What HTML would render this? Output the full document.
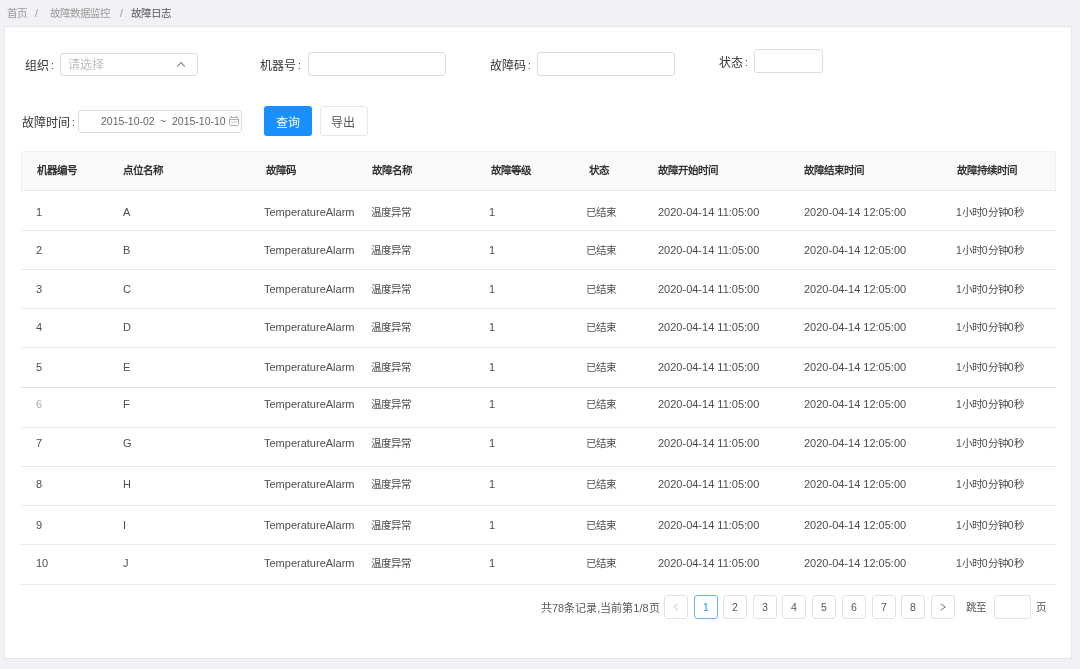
<!DOCTYPE html><html lang="zh-CN"><head><meta charset="utf-8"><style>
*{box-sizing:border-box;margin:0;padding:0}
html,body{width:1080px;height:669px;overflow:hidden;background:#f0f2f5;font-family:"Liberation Sans",sans-serif;color:#4d4d4d}
.a{position:absolute;white-space:nowrap;line-height:14px;height:14px;will-change:transform}
.t{font-size:11px}
.ic{position:absolute;display:block}
.card{position:absolute;left:4px;top:26px;width:1068px;height:633px;background:#fff;border:1px solid #e4e6ea}
.inp{position:absolute;background:#fff;border:1px solid #dedede;border-radius:3px}
.lbl{font-size:12px;color:#333}
.co{font-size:10px;position:relative;top:-1.5px;margin-left:2px}
.btn{position:absolute;border-radius:3px;font-size:12.5px;line-height:30px;text-align:center}
.hd{position:absolute;left:21px;top:151px;width:1035px;height:40px;background:#fafafa;border:1px solid #efefef;border-bottom:1px solid #e8e8e8;border-radius:3px 3px 0 0}
.ln{position:absolute;left:21px;width:1035px;height:1px;background:#ececec}
.th{font-weight:bold;color:#333;font-size:10.5px}
.pg{position:absolute;top:595px;width:24px;height:24px;border:1px solid #e3e3e3;border-radius:3px;background:#fff}
</style></head><body>
<div class="a " style="left:7.00px;top:6.00px;font-size:10.5px;color:#999">首页</div>
<div class="a " style="left:35.00px;top:6.00px;font-size:10.5px;color:#999">/</div>
<div class="a " style="left:50.00px;top:6.00px;font-size:10.5px;color:#999">故障数据监控</div>
<div class="a " style="left:119.70px;top:6.00px;font-size:10.5px;color:#999">/</div>
<div class="a " style="left:131.00px;top:6.00px;font-size:10.5px;color:#555">故障日志</div>
<div class="card"></div>
<div class="a lbl" style="left:25.00px;top:58.60px;">组织<span class="co">:</span></div>
<div class="inp" style="left:60px;top:53px;width:138px;height:23px"></div>
<div class="a " style="left:67.80px;top:58.00px;font-size:12px;color:#bfbfbf">请选择</div>
<svg class="ic" style="left:176px;top:61px" width="10" height="7" viewBox="0 0 10 7"><path d="M1.2 5.6 L5 1.8 L8.8 5.6" fill="none" stroke="#9a9a9a" stroke-width="1.4"/></svg>
<div class="a lbl" style="left:260.00px;top:58.60px;">机器号<span class="co">:</span></div>
<div class="inp" style="left:308px;top:52px;width:138px;height:24px"></div>
<div class="a lbl" style="left:489.50px;top:59.00px;">故障码<span class="co">:</span></div>
<div class="inp" style="left:537px;top:52px;width:138px;height:24px"></div>
<div class="a lbl" style="left:718.50px;top:56.00px;">状态<span class="co">:</span></div>
<div class="inp" style="left:754px;top:49px;width:69px;height:24px"></div>
<div class="a lbl" style="left:21.50px;top:116.00px;">故障时间<span class="co">:</span></div>
<div class="inp" style="left:78px;top:110px;width:164px;height:23px"></div>
<div class="a " style="left:101.00px;top:114.00px;font-size:10.5px;color:#666">2015-10-02</div>
<div class="a " style="left:160.00px;top:114.00px;font-size:10.5px;color:#666">~</div>
<div class="a " style="left:172.00px;top:114.00px;font-size:10.5px;color:#666">2015-10-10</div>
<svg class="ic" style="left:229px;top:115px" width="10" height="11" viewBox="0 0 10 11"><rect x="0.5" y="2.5" width="9" height="8" rx="1" fill="none" stroke="#b0b0b0" stroke-width="1"/><line x1="0.5" y1="4.5" x2="9.5" y2="4.5" stroke="#b0b0b0" stroke-width="1"/><line x1="2.5" y1="1" x2="2.5" y2="3" stroke="#b0b0b0" stroke-width="1"/><line x1="7.5" y1="1" x2="7.5" y2="3" stroke="#b0b0b0" stroke-width="1"/><rect x="2" y="6" width="6" height="2.5" fill="#e0e0e0"/></svg>
<div class="btn" style="left:264px;top:106px;width:48px;height:30px;background:#1890ff"></div>
<div class="btn" style="left:320px;top:106px;width:48px;height:30px;background:#fff;border:1px solid #e8e8e8"></div>
<div class="a " style="left:276.00px;top:115.70px;font-size:12px;color:#fff">查询</div>
<div class="a " style="left:331.00px;top:115.70px;font-size:12px;color:#555">导出</div>
<div class="hd"></div>
<div class="a th" style="left:37.00px;top:163.30px;">机器编号</div>
<div class="a th" style="left:123.00px;top:163.30px;">点位名称</div>
<div class="a th" style="left:265.80px;top:163.30px;">故障码</div>
<div class="a th" style="left:372.40px;top:163.30px;">故障名称</div>
<div class="a th" style="left:491.00px;top:163.30px;">故障等级</div>
<div class="a th" style="left:588.50px;top:163.30px;">状态</div>
<div class="a th" style="left:658.40px;top:163.30px;">故障开始时间</div>
<div class="a th" style="left:803.90px;top:163.30px;">故障结束时间</div>
<div class="a th" style="left:957.20px;top:163.30px;">故障持续时间</div>
<div class="ln" style="top:230px;"></div>
<div class="ln" style="top:269px;"></div>
<div class="ln" style="top:308px;"></div>
<div class="ln" style="top:347px;"></div>
<div class="ln" style="top:387px;background:#e2e2e2;"></div>
<div class="ln" style="top:427px;"></div>
<div class="ln" style="top:466px;"></div>
<div class="ln" style="top:505px;"></div>
<div class="ln" style="top:544px;"></div>
<div class="ln" style="top:584px;"></div>
<div class="a t" style="left:36.00px;top:204.50px;">1</div>
<div class="a t" style="left:123.00px;top:204.50px;">A</div>
<div class="a t" style="left:264.00px;top:204.50px;">TemperatureAlarm</div>
<div class="a t" style="left:371.00px;top:204.50px;font-size:10.5px;">温度异常</div>
<div class="a t" style="left:488.80px;top:204.50px;">1</div>
<div class="a t" style="left:586.00px;top:204.50px;font-size:10.5px;">已结束</div>
<div class="a t" style="left:658.00px;top:204.50px;">2020-04-14 11:05:00</div>
<div class="a t" style="left:804.00px;top:204.50px;">2020-04-14 12:05:00</div>
<div class="a t" style="left:956.00px;top:204.50px;font-size:10.5px;">1小时0分钟0秒</div>
<div class="a t" style="left:36.00px;top:242.50px;">2</div>
<div class="a t" style="left:123.00px;top:242.50px;">B</div>
<div class="a t" style="left:264.00px;top:242.50px;">TemperatureAlarm</div>
<div class="a t" style="left:371.00px;top:242.50px;font-size:10.5px;">温度异常</div>
<div class="a t" style="left:488.80px;top:242.50px;">1</div>
<div class="a t" style="left:586.00px;top:242.50px;font-size:10.5px;">已结束</div>
<div class="a t" style="left:658.00px;top:242.50px;">2020-04-14 11:05:00</div>
<div class="a t" style="left:804.00px;top:242.50px;">2020-04-14 12:05:00</div>
<div class="a t" style="left:956.00px;top:242.50px;font-size:10.5px;">1小时0分钟0秒</div>
<div class="a t" style="left:36.00px;top:281.50px;">3</div>
<div class="a t" style="left:123.00px;top:281.50px;">C</div>
<div class="a t" style="left:264.00px;top:281.50px;">TemperatureAlarm</div>
<div class="a t" style="left:371.00px;top:281.50px;font-size:10.5px;">温度异常</div>
<div class="a t" style="left:488.80px;top:281.50px;">1</div>
<div class="a t" style="left:586.00px;top:281.50px;font-size:10.5px;">已结束</div>
<div class="a t" style="left:658.00px;top:281.50px;">2020-04-14 11:05:00</div>
<div class="a t" style="left:804.00px;top:281.50px;">2020-04-14 12:05:00</div>
<div class="a t" style="left:956.00px;top:281.50px;font-size:10.5px;">1小时0分钟0秒</div>
<div class="a t" style="left:36.00px;top:319.70px;">4</div>
<div class="a t" style="left:123.00px;top:319.70px;">D</div>
<div class="a t" style="left:264.00px;top:319.70px;">TemperatureAlarm</div>
<div class="a t" style="left:371.00px;top:319.70px;font-size:10.5px;">温度异常</div>
<div class="a t" style="left:488.80px;top:319.70px;">1</div>
<div class="a t" style="left:586.00px;top:319.70px;font-size:10.5px;">已结束</div>
<div class="a t" style="left:658.00px;top:319.70px;">2020-04-14 11:05:00</div>
<div class="a t" style="left:804.00px;top:319.70px;">2020-04-14 12:05:00</div>
<div class="a t" style="left:956.00px;top:319.70px;font-size:10.5px;">1小时0分钟0秒</div>
<div class="a t" style="left:36.00px;top:359.50px;">5</div>
<div class="a t" style="left:123.00px;top:359.50px;">E</div>
<div class="a t" style="left:264.00px;top:359.50px;">TemperatureAlarm</div>
<div class="a t" style="left:371.00px;top:359.50px;font-size:10.5px;">温度异常</div>
<div class="a t" style="left:488.80px;top:359.50px;">1</div>
<div class="a t" style="left:586.00px;top:359.50px;font-size:10.5px;">已结束</div>
<div class="a t" style="left:658.00px;top:359.50px;">2020-04-14 11:05:00</div>
<div class="a t" style="left:804.00px;top:359.50px;">2020-04-14 12:05:00</div>
<div class="a t" style="left:956.00px;top:359.50px;font-size:10.5px;">1小时0分钟0秒</div>
<div class="a t" style="left:36.00px;top:397.20px;color:#aaa;">6</div>
<div class="a t" style="left:123.00px;top:397.20px;">F</div>
<div class="a t" style="left:264.00px;top:397.20px;">TemperatureAlarm</div>
<div class="a t" style="left:371.00px;top:397.20px;font-size:10.5px;">温度异常</div>
<div class="a t" style="left:488.80px;top:397.20px;">1</div>
<div class="a t" style="left:586.00px;top:397.20px;font-size:10.5px;">已结束</div>
<div class="a t" style="left:658.00px;top:397.20px;">2020-04-14 11:05:00</div>
<div class="a t" style="left:804.00px;top:397.20px;">2020-04-14 12:05:00</div>
<div class="a t" style="left:956.00px;top:397.20px;font-size:10.5px;">1小时0分钟0秒</div>
<div class="a t" style="left:36.00px;top:436.30px;">7</div>
<div class="a t" style="left:123.00px;top:436.30px;">G</div>
<div class="a t" style="left:264.00px;top:436.30px;">TemperatureAlarm</div>
<div class="a t" style="left:371.00px;top:436.30px;font-size:10.5px;">温度异常</div>
<div class="a t" style="left:488.80px;top:436.30px;">1</div>
<div class="a t" style="left:586.00px;top:436.30px;font-size:10.5px;">已结束</div>
<div class="a t" style="left:658.00px;top:436.30px;">2020-04-14 11:05:00</div>
<div class="a t" style="left:804.00px;top:436.30px;">2020-04-14 12:05:00</div>
<div class="a t" style="left:956.00px;top:436.30px;font-size:10.5px;">1小时0分钟0秒</div>
<div class="a t" style="left:36.00px;top:476.70px;">8</div>
<div class="a t" style="left:123.00px;top:476.70px;">H</div>
<div class="a t" style="left:264.00px;top:476.70px;">TemperatureAlarm</div>
<div class="a t" style="left:371.00px;top:476.70px;font-size:10.5px;">温度异常</div>
<div class="a t" style="left:488.80px;top:476.70px;">1</div>
<div class="a t" style="left:586.00px;top:476.70px;font-size:10.5px;">已结束</div>
<div class="a t" style="left:658.00px;top:476.70px;">2020-04-14 11:05:00</div>
<div class="a t" style="left:804.00px;top:476.70px;">2020-04-14 12:05:00</div>
<div class="a t" style="left:956.00px;top:476.70px;font-size:10.5px;">1小时0分钟0秒</div>
<div class="a t" style="left:36.00px;top:517.90px;">9</div>
<div class="a t" style="left:123.00px;top:517.90px;">I</div>
<div class="a t" style="left:264.00px;top:517.90px;">TemperatureAlarm</div>
<div class="a t" style="left:371.00px;top:517.90px;font-size:10.5px;">温度异常</div>
<div class="a t" style="left:488.80px;top:517.90px;">1</div>
<div class="a t" style="left:586.00px;top:517.90px;font-size:10.5px;">已结束</div>
<div class="a t" style="left:658.00px;top:517.90px;">2020-04-14 11:05:00</div>
<div class="a t" style="left:804.00px;top:517.90px;">2020-04-14 12:05:00</div>
<div class="a t" style="left:956.00px;top:517.90px;font-size:10.5px;">1小时0分钟0秒</div>
<div class="a t" style="left:36.00px;top:555.50px;">10</div>
<div class="a t" style="left:123.00px;top:555.50px;">J</div>
<div class="a t" style="left:264.00px;top:555.50px;">TemperatureAlarm</div>
<div class="a t" style="left:371.00px;top:555.50px;font-size:10.5px;">温度异常</div>
<div class="a t" style="left:488.80px;top:555.50px;">1</div>
<div class="a t" style="left:586.00px;top:555.50px;font-size:10.5px;">已结束</div>
<div class="a t" style="left:658.00px;top:555.50px;">2020-04-14 11:05:00</div>
<div class="a t" style="left:804.00px;top:555.50px;">2020-04-14 12:05:00</div>
<div class="a t" style="left:956.00px;top:555.50px;font-size:10.5px;">1小时0分钟0秒</div>
<div class="a " style="left:541.00px;top:600.80px;font-size:11px;color:#5a5a5a">共78条记录,当前第1/8页</div>
<div class="pg" style="left:664px;"></div>
<svg class="ic" style="left:673px;top:603.2px" width="6" height="8" viewBox="0 0 6 8"><path d="M5 0.8 L0.8 4 L5 7.2" fill="none" stroke="#c4c4c4" stroke-width="0.9"/></svg>
<div class="pg" style="left:694px;border-color:#69b4ff;"></div>
<div class="a " style="left:694.00px;top:600.00px;font-size:10.5px;color:#1890ff;width:24px;text-align:center">1</div>
<div class="pg" style="left:723px;"></div>
<div class="a " style="left:723.00px;top:600.00px;font-size:10.5px;color:#555;width:24px;text-align:center">2</div>
<div class="pg" style="left:753px;"></div>
<div class="a " style="left:753.00px;top:600.00px;font-size:10.5px;color:#555;width:24px;text-align:center">3</div>
<div class="pg" style="left:782px;"></div>
<div class="a " style="left:782.00px;top:600.00px;font-size:10.5px;color:#555;width:24px;text-align:center">4</div>
<div class="pg" style="left:812px;"></div>
<div class="a " style="left:812.00px;top:600.00px;font-size:10.5px;color:#555;width:24px;text-align:center">5</div>
<div class="pg" style="left:842px;"></div>
<div class="a " style="left:842.00px;top:600.00px;font-size:10.5px;color:#555;width:24px;text-align:center">6</div>
<div class="pg" style="left:872px;"></div>
<div class="a " style="left:872.00px;top:600.00px;font-size:10.5px;color:#555;width:24px;text-align:center">7</div>
<div class="pg" style="left:901px;"></div>
<div class="a " style="left:901.00px;top:600.00px;font-size:10.5px;color:#555;width:24px;text-align:center">8</div>
<div class="pg" style="left:931px;"></div>
<svg class="ic" style="left:940px;top:603.2px" width="6" height="8" viewBox="0 0 6 8"><path d="M0.8 0.8 L5.2 4 L0.8 7.2" fill="none" stroke="#666" stroke-width="0.9"/></svg>
<div class="a " style="left:966.00px;top:600.00px;font-size:10.5px;color:#555">跳至</div>
<div class="pg" style="left:994px;width:37px"></div>
<div class="a " style="left:1036.00px;top:600.00px;font-size:10.5px;color:#555">页</div>
</body></html>
